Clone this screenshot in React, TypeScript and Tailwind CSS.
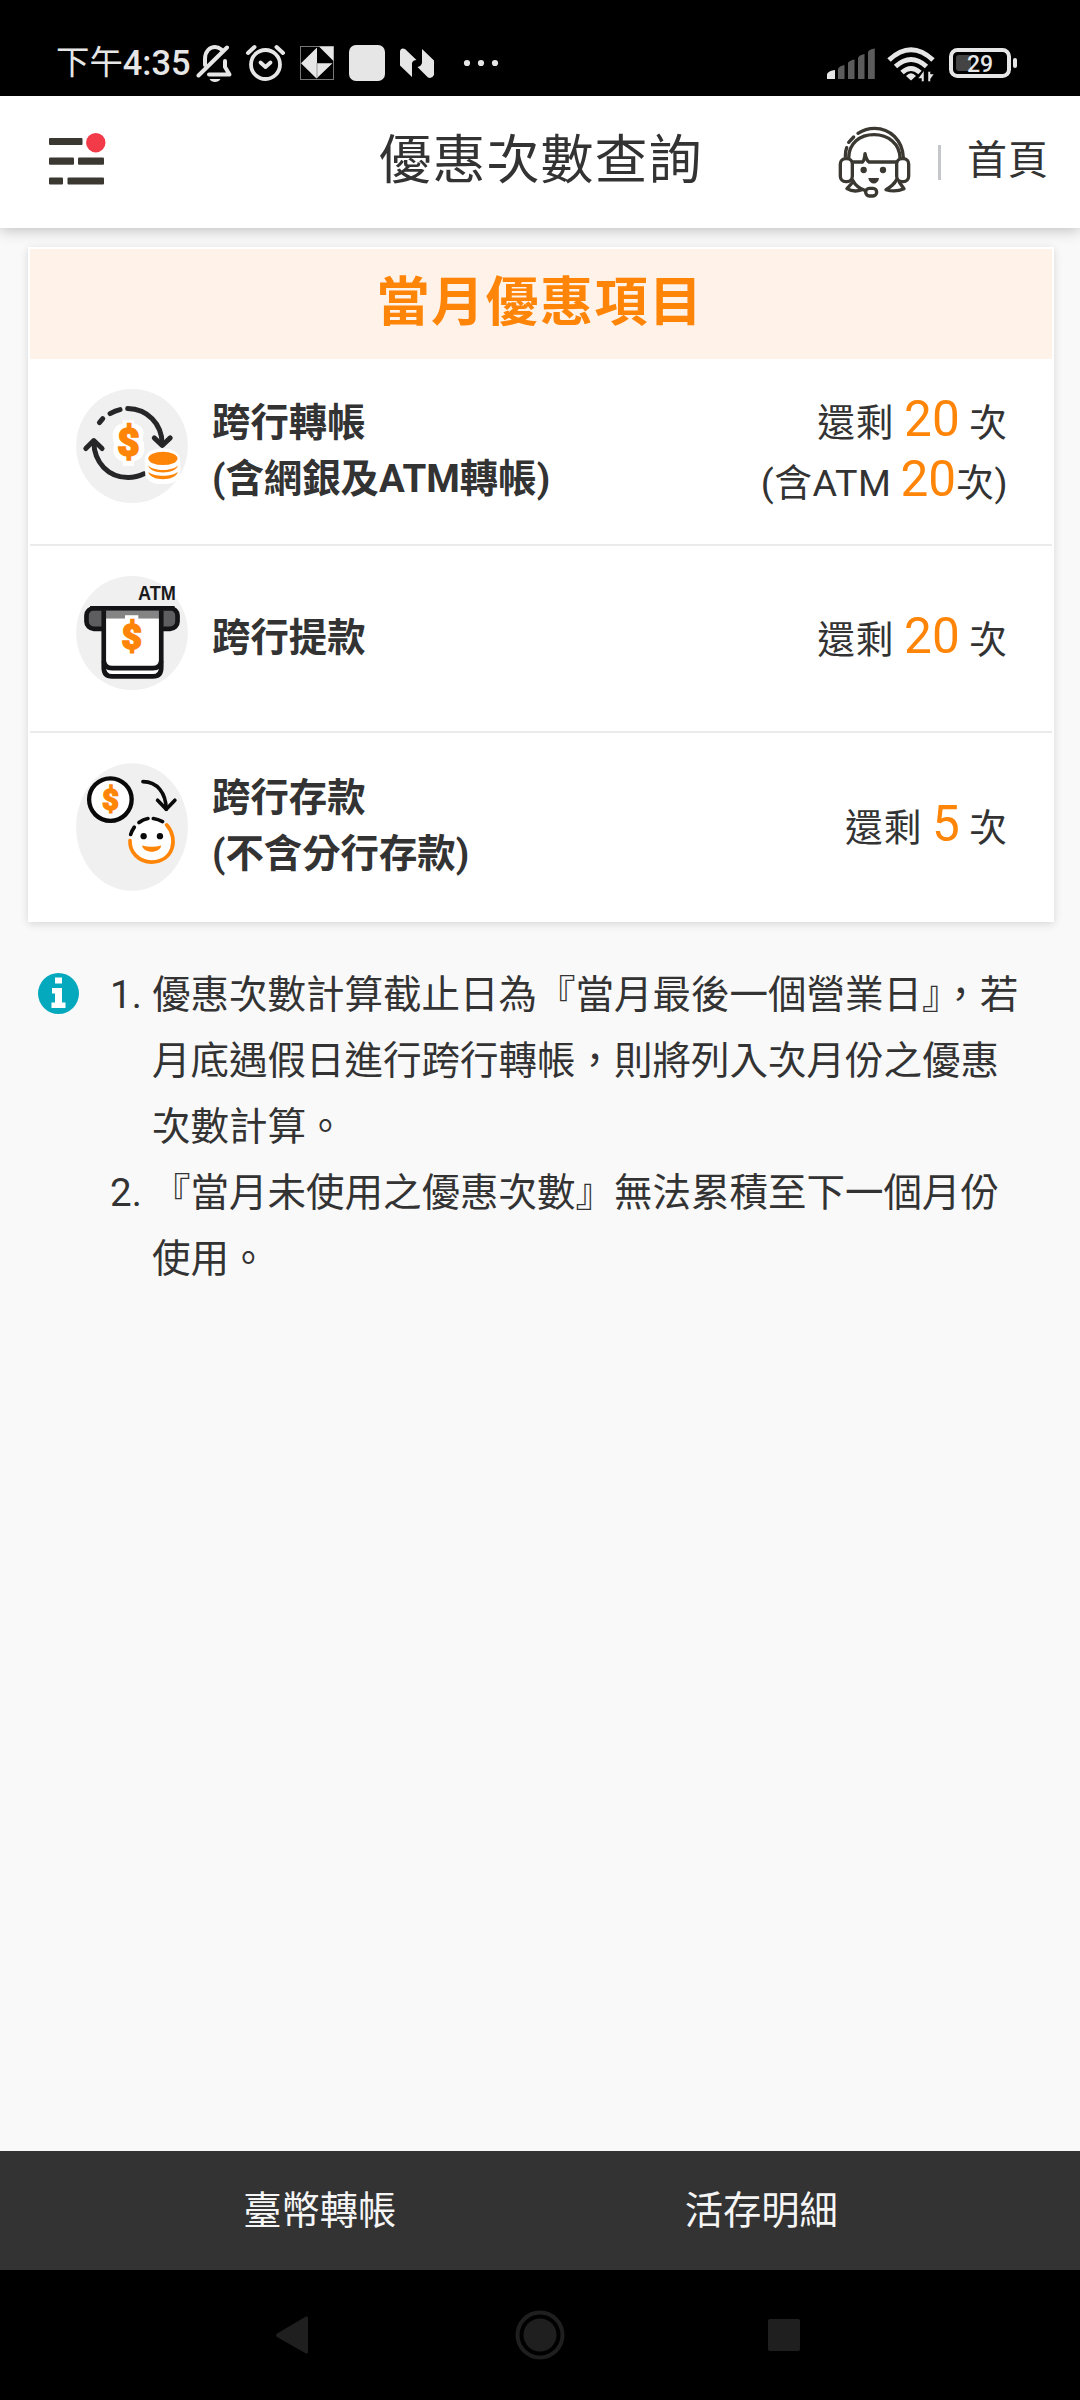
import type { ReactNode } from 'react';

type BenefitItem = {
  id: string;
  icon: ReactNode;
  label: string[];
  remain: ReactNode;
};

const Num = ({ children }: { children: ReactNode }) => (
  <span className="text-[49.500px] leading-none tracking-normal text-[#ff8508]">{children}</span>
);

const StatusBar = () => (
  <div className="flex h-24 items-center bg-black pt-[30px] pl-14 text-[#e6e6e6]">
    <span className="text-[33.400px] leading-[36px]">下午</span>
    <span className="text-[34.400px] leading-[36px] font-medium">4:35</span>
    <svg className="ml-[5px] h-[38px] w-[304px]" viewBox="196 44 304 38" fill="none">
      {/* Muted bell */}
      <g stroke="#e6e6e6" strokeWidth="4" strokeLinecap="round" strokeLinejoin="round">
        <path d="M205 65V59C205 51 210 47 215 47C217.500 47 219.500 48 221.500 49.500" />
        <path d="M225 61V67L229.500 74.500H209" />
        <path d="M198.500 75.500L227 47.500" />
      </g>
      <path d="M209.500 79H220.500C218.500 83 211.500 83 209.500 79Z" fill="#e6e6e6" />
      {/* Alarm clock */}
      <g stroke="#e6e6e6" strokeLinecap="round" strokeLinejoin="round">
        <circle cx="265.500" cy="64.500" r="14.500" strokeWidth="3.800" />
        <path d="M260.500 62.500L265.500 67L270.500 62.500" strokeWidth="3.800" />
        <path d="M248 53L254.500 47M276.500 47L283 53" strokeWidth="4" />
      </g>
      <rect x="300.500" y="46.500" width="33" height="33" stroke="#777" />
      <path d="M316.500 48L301 63.200L316.500 78.500L332.500 63.200H317V48ZM319 46.500H333.500V61Z" fill="#e6e6e6" />
      <path d="M317 63V78" stroke="#999" />
      <rect x="349" y="45" width="36" height="36" rx="7" fill="#e6e6e6" />
      <path d="M400 51Q401 47.500 405 49L416.500 60Q413 60 412 63V77L400 65.500Z" fill="#e6e6e6" />
      <path d="M422 49L434 60.500V75Q432 79 428 77.500L417.500 67Q421 66.500 422 63Z" fill="#e6e6e6" />
      <g fill="#e6e6e6">
        <circle cx="467" cy="63" r="3.100" />
        <circle cx="481" cy="63" r="3.100" />
        <circle cx="495" cy="63" r="3.100" />
      </g>
    </svg>
    <svg className="mr-[62px] ml-auto h-[38px] w-[192px]" viewBox="826 44 192 38" fill="none">
      <path d="M827 79V74Q829 70.500 835 70V79Z" fill="#e6e6e6" />
      <path
        d="M838 79V69Q839 66 844.500 65V79ZM848 79V63Q849 60.500 854.500 59.500V79ZM858 79V58Q859 55 864.500 54V79ZM868 79V52Q869 49 874.800 48.500V79Z"
        fill="#5c5c5c"
      />
      {/* Wifi */}
      <g stroke="#e6e6e6" strokeWidth="5">
        <path d="M889 60Q911 39.500 933 60" />
        <path d="M895.500 66.500Q911 52.500 926.500 66.500" />
        <path d="M902 72.500Q911 64.500 920 72.500" />
      </g>
      <path d="M906 76Q911 70.500 916 76L911 80.500Z" fill="#e6e6e6" />
      <path
        d="M924 70.500L918 78.500H921.500V81.500H924ZM928 81.500V71.500H930.500V74H934L930.500 79V81.500Z"
        fill="#e6e6e6"
        stroke="#000"
        strokeWidth=".5"
      />
      {/* Battery */}
      <rect x="956" y="55" width="15" height="16" rx="3" fill="#444" />
      <rect x="951" y="50" width="58" height="26" rx="6.500" stroke="#e6e6e6" strokeWidth="4" />
      <rect x="1013" y="58" width="4" height="10" rx="2" fill="#e6e6e6" />
      <text x="980" y="71.500" textAnchor="middle" fill="#e6e6e6" fontSize="23" fontWeight="500">
        29
      </text>
    </svg>
  </div>
);

const Header = () => (
  <header className="relative z-10 grid h-[132px] grid-cols-[1fr_auto_1fr] items-center bg-white shadow-[0_2px_14px_rgba(0,0,0,0.24)]">
    <svg className="-mt-[7px] ml-12 h-[54px] w-[60px]" viewBox="48 132 60 54" fill="#3b3832">
      <rect x="49" y="138" width="33.500" height="7" rx="1" />
      <rect x="49" y="157.600" width="25" height="7.200" rx="1" />
      <rect x="78" y="157.600" width="26" height="7.200" rx="1" />
      <rect x="49" y="177.400" width="14" height="7" rx="1" />
      <rect x="67.500" y="177.400" width="36.500" height="7" rx="1" />
      <circle cx="95.800" cy="142.700" r="9.700" fill="#f23a48" />
    </svg>
    <h1 className="-mt-0.5 pl-px text-[53px] leading-[60px] tracking-[1px] text-[#333]">優惠次數查詢</h1>
    <div className="flex items-center justify-end pr-[31px]">
      <svg
        className="mt-0.5 h-[76px] w-[76px]"
        viewBox="49 46 228 228"
        fill="none"
        stroke="#3b3832"
        strokeWidth="10"
        strokeLinecap="round"
        strokeLinejoin="round"
      >
        {/* Headband */}
        <path d="M84 146C84 100 118 75 160 75C202 75 238 102 238 146" />
        <path d="M112 71C130 59 145 56 162 56C208 56 246 92 248 144" />
        <path d="M74 140C74 130 75 122 78 114M84 98L99 82" />
        {/* Ear cups */}
        <rect x="59" y="147" width="36" height="69" rx="16" />
        <rect x="228" y="147" width="36" height="69" rx="16" />
        {/* Face */}
        <path d="M96 157H126Q132 150 133 132Q137 152 145 157H228" />
        <path d="M96 212Q108 235 134 243M94 220L79 237Q100 249 124 240" />
        <path d="M228 210Q218 228 196 240Q224 249 250 237L236 218" />
        <rect x="135" y="236" width="33" height="23" rx="11" />
        <circle cx="129" cy="181" r="9.500" fill="#3b3832" stroke="none" />
        <circle cx="187" cy="181" r="9.500" fill="#3b3832" stroke="none" />
        <path d="M143 205H175C173 227 146 227 143 205Z" fill="#3b3832" stroke="none" />
      </svg>
      <span className="ml-[25px] h-[35px] w-[3px] bg-[#c4c6ca]" />
      <span className="-mt-0.5 ml-[26px] text-[40px] leading-[48px] tracking-[1px] text-[#333]">首頁</span>
    </div>
  </header>
);

const TransferIcon = () => (
  <svg className="-mt-3 h-[114px] w-[112px]" viewBox="18 26 336 343" fill="none">
    <ellipse cx="186" cy="197.500" rx="168" ry="171.500" fill="#f0f0f0" />
    <g stroke="#262628" strokeWidth="15" strokeLinecap="round" strokeLinejoin="round">
      <path d="M173 85C232 86 276 130 277 192" />
      <path d="M253 173L277 196L301 173" />
      <path d="M120 100Q136 91 150 88M88 127L98 115" />
      <path d="M71 184C72 248 115 292 174 292Q200 292 222 281" />
      <path d="M47 205L71 181L96 205" />
    </g>
    <path
      d="M158 120H192V130Q216 134 221 156L218 178Q224 190 223 212Q219 238 192 244V257H158V245Q134 238 130 214L132 190Q126 174 128 158Q134 134 158 130Z"
      fill="#fff"
    />
    <text x="175" y="229" textAnchor="middle" fill="#ff8508" stroke="#ff8508" strokeWidth="5" fontSize="116" fontWeight="900">
      $
    </text>
    <path d="M224 240C224 192 330 192 331 240V285C326 322 230 322 226 285Z" fill="#fff" />
    <g fill="#ff8508">
      <ellipse cx="279" cy="235" rx="44" ry="20" />
      <path d="M235 256C250 274 308 274 324 256C318 284 240 284 235 256Z" />
      <path d="M235 275C250 291 308 291 324 275C318 305 240 305 235 275Z" />
    </g>
  </svg>
);

const AtmIcon = () => (
  <svg className="-mt-3 h-[114px] w-[112px]" viewBox="18 587 336 343" fill="none">
    <ellipse cx="186" cy="758.500" rx="168" ry="171.500" fill="#f0f0f0" />
    <text
      x="261"
      y="659"
      textAnchor="middle"
      fill="#1a1a1c"
      fontSize="59"
      fontWeight="700"
      className="font-['Liberation_Sans',sans-serif]"
      textLength="114"
      lengthAdjust="spacingAndGlyphs"
    >
      ATM
    </text>
    <rect x="49" y="684" width="274" height="62" rx="22" fill="#5e5e61" stroke="#141416" strokeWidth="14" />
    <path d="M101 692H274V862Q274 889 249 889H126Q101 889 101 862Z" fill="#fff" />
    <rect x="101" y="690" width="173" height="25" fill="#848484" />
    <path d="M165 705H205V722H165Z" fill="#fff" />
    <path d="M101 690V862Q101 889 126 889H249Q274 889 274 862V690" stroke="#141416" strokeWidth="14" />
    <path d="M101 843Q104 864 126 864H249Q271 864 274 843" stroke="#141416" strokeWidth="14" />
    <path d="M60 684H314" stroke="#141416" strokeWidth="13" />
    <text x="185" y="808" textAnchor="middle" fill="#ff8508" stroke="#ff8508" strokeWidth="5" fontSize="106" fontWeight="900">
      $
    </text>
  </svg>
);

const DepositIcon = () => (
  <svg className="h-[128px] w-[112px]" viewBox="18 1145 336 385" fill="none">
    <ellipse cx="186" cy="1337.500" rx="168" ry="192" fill="#f0f0f0" />
    <circle cx="121" cy="1255" r="64" fill="#fff" stroke="#0a0a0a" strokeWidth="13" />
    <text x="121" y="1287" textAnchor="middle" fill="#ff8508" stroke="#ff8508" strokeWidth="4" fontSize="88" fontWeight="900">
      $
    </text>
    <g stroke="#0a0a0a" strokeWidth="11" strokeLinecap="round" strokeLinejoin="round">
      <path d="M219 1201C262 1202 288 1234 289 1284" />
      <path d="M263 1257L289 1284L315 1257" />
    </g>
    <circle cx="245" cy="1378" r="65" fill="#fff" />
    <path d="M290 1331C327 1372 311 1442 245 1443C205 1442 178 1412 180 1378" stroke="#ff8508" strokeWidth="11" strokeLinecap="round" />
    <path d="M182 1360Q186 1348 193 1338M207 1324Q220 1314 234 1312M250 1312Q264 1314 278 1321" stroke="#0a0a0a" strokeWidth="11" strokeLinecap="round" />
    <circle cx="221" cy="1365" r="9.500" fill="#0a0a0a" />
    <circle cx="270" cy="1365" r="9.500" fill="#0a0a0a" />
    <path d="M216 1393Q245 1401 274 1393C270 1418 221 1418 216 1393Z" fill="#ff8508" />
  </svg>
);

const items: BenefitItem[] = [
  {
    id: 'transfer',
    icon: <TransferIcon />,
    label: ['跨行轉帳', '(含網銀及ATM轉帳)'],
    remain: (
      <>
        <p>還剩 <Num>20</Num> 次</p>
        <p className="tracking-[0.500px]">(含ATM <Num>20</Num>次)</p>
      </>
    ),
  },
  {
    id: 'withdraw',
    icon: <AtmIcon />,
    label: ['跨行提款'],
    remain: <p>還剩 <Num>20</Num> 次</p>,
  },
  {
    id: 'deposit',
    icon: <DepositIcon />,
    label: ['跨行存款', '(不含分行存款)'],
    remain: <p>還剩 <Num>5</Num> 次</p>,
  },
];

const notes = [
  '優惠次數計算截止日為『當月最後一個營業日』，若月底遇假日進行跨行轉帳，則將列入次月份之優惠次數計算。',
  '『當月未使用之優惠次數』無法累積至下一個月份使用。',
];

const BenefitCard = () => (
  <section className="mt-[19px] mr-[26px] ml-7 border-2 border-white bg-white shadow-[0_2px_8px_rgba(0,0,0,0.14)]">
    <h2 className="flex h-[110px] items-center justify-center bg-[#fff2e9] pr-0.5 pb-0.5 text-[53px] leading-[60px] font-bold tracking-[1.500px] text-[#ff8508]">
      當月優惠項目
    </h2>
    <ul className="divide-y-2 divide-[#ebebeb]">
      {items.map((item) => (
        <li key={item.id} className="flex h-[187px] items-center pr-11 pl-[46px]">
          {item.icon}
          <div className="mb-0.5 ml-6 text-[38.400px] leading-[55.300px] font-bold text-[#333]">
            {item.label.map((line) => (
              <p key={line}>{line}</p>
            ))}
          </div>
          <div className="mt-0.5 ml-auto text-right text-[37.700px] leading-[60px] tracking-[1px] text-[#333] [word-spacing:-0.800px]">
            {item.remain}
          </div>
        </li>
      ))}
    </ul>
  </section>
);

const Notes = () => (
  <section className="mt-10 flex pl-[38px]">
    <svg className="mt-[11px] h-[41px] w-[41px]" viewBox="0 0 41 41">
      <circle cx="20.500" cy="20.500" r="20.500" fill="#05a9bd" />
      <path d="M17 4.500H24V10.500H17ZM14 15H24V29.500H27.500V35H13.500V29.500H17V20.500H14Z" fill="#fff" />
    </svg>
    <ol className="ml-[31px] w-[918px] text-[38.500px] leading-[66px] text-[#333]">
      {notes.map((note, i) => (
        <li key={note} className="flex">
          <span className="w-[42px] shrink-0">{i + 1}.</span>
          <p>{note}</p>
        </li>
      ))}
    </ol>
  </section>
);

const BottomBar = () => (
  <>
    <div className="grid h-[119px] grid-cols-2 items-center bg-[#333] pr-[98px] pl-[99px] text-center text-[38.300px] leading-[56px] text-[#f5f5f5]">
      <span>臺幣轉帳</span>
      <span>活存明細</span>
    </div>
    <div className="flex h-[130px] items-center justify-center bg-black">
      <svg className="mr-[207px] h-[38px] w-8" viewBox="0 0 32 38" fill="#1f1f1f">
        <path d="M30 .5Q32 0 32 2V36Q32 38 30 37.500L1 21Q-.5 19 1 17.500Z" />
      </svg>
      <svg className="h-[50px] w-[50px]" viewBox="0 0 50 50">
        <circle cx="25" cy="25" r="22.500" fill="none" stroke="#1f1f1f" strokeWidth="4" />
        <circle cx="25" cy="25" r="16.500" fill="#1f1f1f" />
      </svg>
      <div className="mr-1 ml-[203px] h-8 w-8 rounded-[2px] bg-[#1f1f1f]" />
    </div>
  </>
);

const App = () => {
  return (
    <div className="flex h-[2400px] w-[1080px] flex-col bg-[#f9f9f9] font-['Roboto','Noto_Sans_CJK_TC',sans-serif]">
      <StatusBar />
      <Header />
      <main className="flex-1">
        <BenefitCard />
        <Notes />
      </main>
      <BottomBar />
    </div>
  );
};

export default App;
